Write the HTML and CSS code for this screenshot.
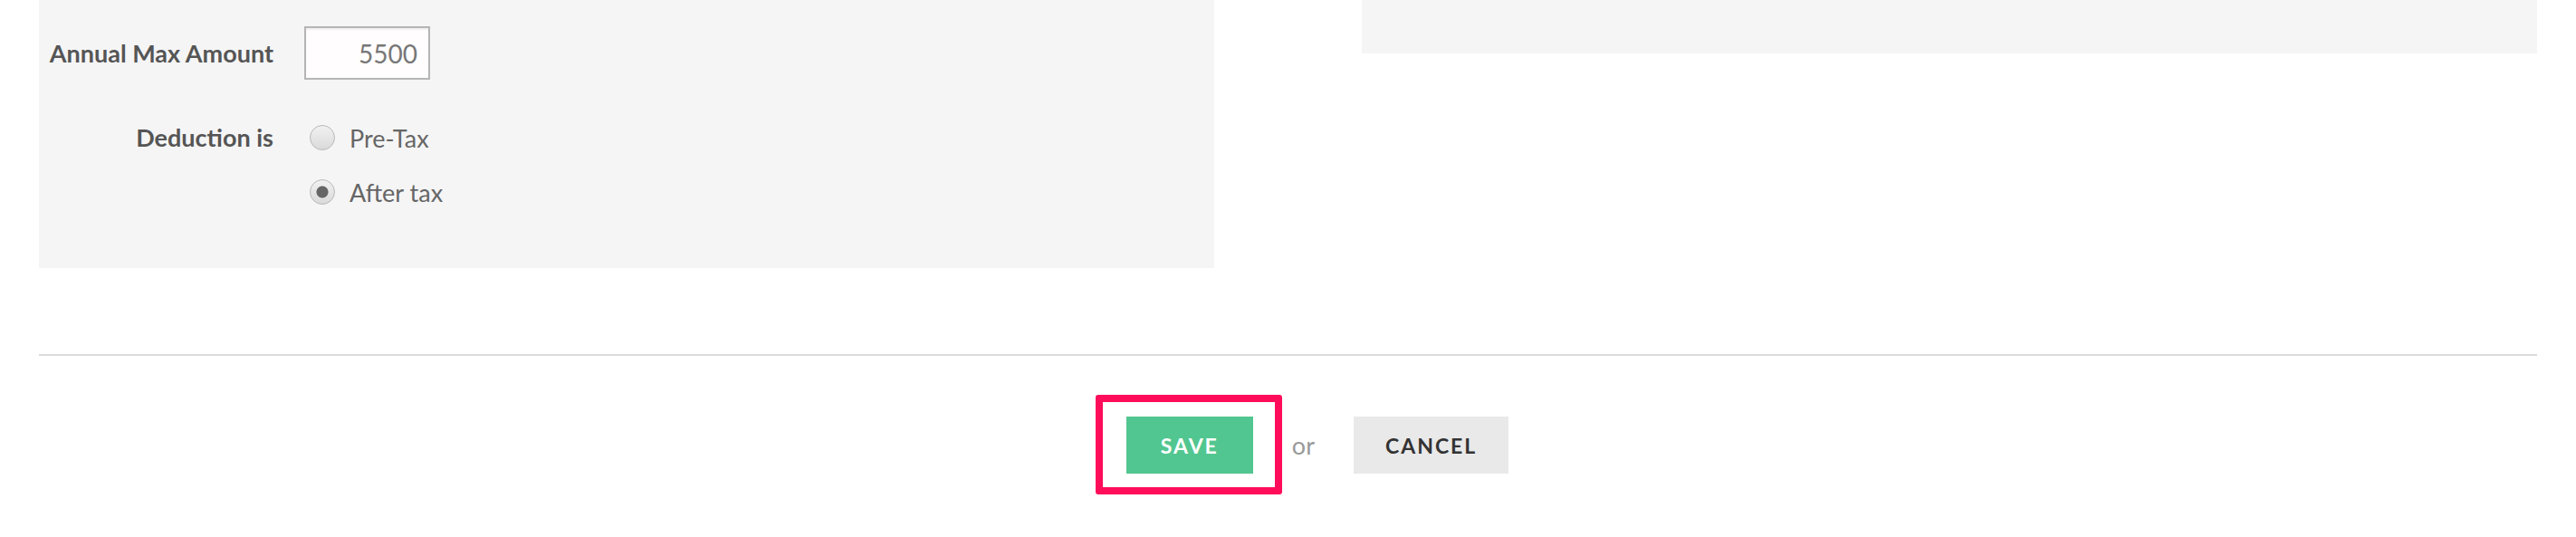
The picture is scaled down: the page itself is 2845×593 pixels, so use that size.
FILE: index.html
```html
<!DOCTYPE html>
<html lang="en">
<head>
  <meta charset="UTF-8">
  <title>Deduction settings</title>
  <link rel="stylesheet" href="styles.css">
</head>
<body>
  <div class="page">
    <div class="columns">
      <!-- left: deduction form -->
      <form class="panel deduction-form">
        <label class="field-label" for="annualMax">Annual Max Amount</label>
        <input class="amount" type="text" id="annualMax" name="annualMax" value="5500">

        <span class="field-label radio-label">Deduction is</span>
        <div class="radio-group">
          <label class="radio-option">
            <input type="radio" name="taxType" value="pre">
            <span>Pre-Tax</span>
          </label>
          <label class="radio-option">
            <input type="radio" name="taxType" value="after" checked>
            <span>After tax</span>
          </label>
        </div>
      </form>

      <!-- right: summary box (scrolled) -->
      <div class="panel side-panel"></div>
    </div>

    <hr class="divider">

    <div class="actions">
      <span class="highlight">
        <button class="btn btn-save" type="button">Save</button>
      </span>
      <span class="or">or</span>
      <button class="btn btn-cancel" type="button">Cancel</button>
    </div>
  </div>
</body>
</html>
```

FILE: styles.css
```css
body {
  margin: 0;
  background-color: #fff;
  font-family: Lato, "Open Sans", Arial, sans-serif;
  color: #555;
}

.page {
  padding: 0 43px 80px 43px;
}

.columns {
  display: grid;
  grid-template-columns: 1fr 1fr;
  column-gap: 163px;
  align-items: start;
}

.panel {
  background-color: #f5f5f5;
}

.side-panel {
  height: 59px;
}

/* formulario */
.deduction-form {
  display: grid;
  grid-template-columns: 259px auto;
  column-gap: 34px;
  row-gap: 44px;
  justify-content: start;
  align-items: center;
  padding: 29px 0 64px 0;
  margin: 0;
}

.field-label {
  justify-self: end;
  font-size: 27px;
  font-weight: 700;
  color: #555;
}

.radio-label {
  align-self: start;
  line-height: 40px;
}

.amount {
  box-sizing: border-box;
  width: 139px;
  height: 59px;
  border: 2px solid #b5b5b5;
  background: #fffdfd;
  padding: 0 12px 0 0;
  text-align: right;
  font-family: inherit;
  font-size: 28px;
  color: #777;
  box-shadow: inset 0 2px 2px rgba(0, 0, 0, 0.06);
}

.radio-group {
  display: flex;
  flex-direction: column;
  gap: 20px;
  margin-left: 6px;
}

.radio-option {
  display: flex;
  align-items: center;
  gap: 16px;
  height: 40px;
  font-size: 27px;
  color: #666;
}

.radio-option input {
  appearance: none;
  -webkit-appearance: none;
  margin: 0;
  width: 28px;
  height: 28px;
  border: 1px solid #b9b9b9;
  border-radius: 50%;
  background: linear-gradient(#f1f1f1, #dadada);
}

.radio-option input:checked {
  background: radial-gradient(circle, #666 0 6px, transparent 7px), linear-gradient(#f1f1f1, #dadada);
}

.divider {
  border: 0;
  border-top: 2px solid #dcdcdc;
  margin: 95px 0 0 0;
}

/* botones */
.actions {
  display: flex;
  justify-content: center;
  align-items: center;
  gap: 43px;
  padding: 67px 0 0 65px;
}

.btn {
  height: 63px;
  padding: 0 38px;
  border: none;
  font-family: inherit;
  font-size: 23px;
  font-weight: 700;
  letter-spacing: 2px;
  text-transform: uppercase;
}

.btn-save {
  background-color: #52c690;
  color: #fff;
}

.btn-cancel {
  padding: 0 35px;
  background-color: #e9e9e9;
  color: #333;
}

.or {
  font-size: 27px;
  color: #999;
}

.highlight {
  position: relative;
  display: flex;
}

.highlight::after {
  content: "";
  position: absolute;
  top: -24px;
  right: -32px;
  bottom: -23px;
  left: -34px;
  border: 8px solid #ff0d5a;
  border-radius: 3px;
}
```
